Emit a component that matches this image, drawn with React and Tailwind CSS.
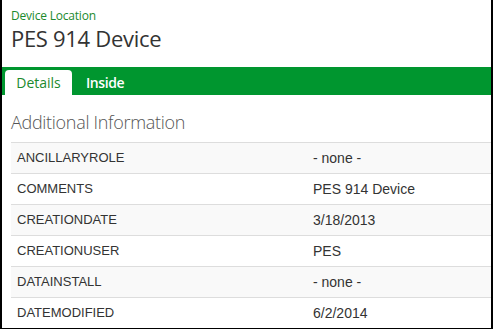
export default function App() {
  const rows = [
    ["ANCILLARYROLE", "- none -"],
    ["COMMENTS", "PES 914 Device"],
    ["CREATIONDATE", "3/18/2013"],
    ["CREATIONUSER", "PES"],
    ["DATAINSTALL", "- none -"],
    ["DATEMODIFIED", "6/2/2014"],
  ];
  return (
    <div className="w-[493px] h-[329px] bg-white border-l-2 border-r-2 border-b border-black overflow-hidden flex flex-col font-['Liberation_Sans',sans-serif]">
      <div className="h-[68px] pl-[9px] pt-[9px]">
        <div className="text-[12px] leading-[14px] text-[#1c8a2e] font-['Open_Sans',sans-serif] tracking-[-0.2px]">Device Location</div>
        <div className="text-[22px] leading-[30px] text-[#333] font-['Open_Sans',sans-serif] tracking-[-0.3px]">PES 914 Device</div>
      </div>
      <div className="h-[29px] bg-[#00962f] flex items-end pl-[3px]">
        <div className="w-[67px] h-[25px] bg-white rounded-t-[4px] flex items-center justify-center text-[14px] text-[#1c8a2e] font-['Open_Sans',sans-serif]">Details</div>
        <div className="h-[25px] flex items-center pl-[14px] text-[14px] text-white font-semibold tracking-[-0.4px] font-['Open_Sans',sans-serif]">Inside</div>
      </div>
      <div className="pl-[9px] flex-1 flex flex-col">
        <div className="h-[47px] flex items-center text-[18px] font-light text-[#555] font-['Open_Sans',sans-serif] tracking-[-0.3px] pt-[7px]">Additional Information</div>
        <div className="flex flex-col">
          {rows.map(([k, v], i) => (
            <div key={k} className={`h-[31px] border-t border-[#ddd] flex items-center text-[13px] text-[#333] ${i % 2 === 0 ? "bg-[#f9f9f9]" : "bg-white"}`}>
              <div className="w-[302px] pl-[6px]">{k}</div>
              <div className="text-[14px]">{v}</div>
            </div>
          ))}
        </div>
      </div>
    </div>
  );
}
